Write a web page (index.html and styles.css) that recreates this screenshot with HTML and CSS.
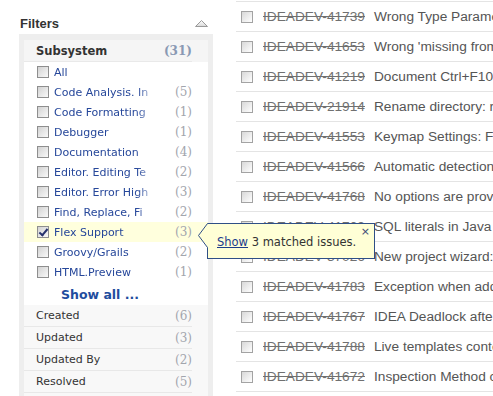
FILE: index.html
```html
<!DOCTYPE html>
<html lang="en">
  <head>
    <meta charset="UTF-8" />
    <title>Issues</title>
    <link rel="stylesheet" href="styles.css">
  </head>
  <body>
    <div class="page">
      <aside class="filters">
        <div class="filters-head">
          <h3>Filters</h3>
          <svg class="collapse" width="13" height="8" viewBox="0 0 13 8">
            <defs>
              <linearGradient id="arr" x1="0" y1="0" x2="0" y2="1">
                <stop offset="0" stop-color="#ffffff" />
                <stop offset="1" stop-color="#d8d8d8" />
              </linearGradient>
            </defs>
            <polygon points="0.5,7.5 6.5,1.5 12.5,7.5" fill="url(#arr)" stroke="#9a9a9a" />
          </svg>
        </div>

        <div class="filter-box">
          <div class="filter-inner">
            <div class="group-head">
              <div class="group-title">
                <span>Subsystem</span>
                <span class="total">(31)</span>
              </div>
            </div>

            <ul class="options">
              <li><span class="cb"></span><span class="label">All</span></li>
              <li><span class="cb"></span><span class="label">Code Analysis. In</span><span class="count">(5)</span></li>
              <li><span class="cb"></span><span class="label">Code Formatting</span><span class="count">(1)</span></li>
              <li><span class="cb"></span><span class="label">Debugger</span><span class="count">(1)</span></li>
              <li><span class="cb"></span><span class="label">Documentation</span><span class="count">(4)</span></li>
              <li><span class="cb"></span><span class="label">Editor. Editing Te</span><span class="count">(2)</span></li>
              <li><span class="cb"></span><span class="label">Editor. Error High</span><span class="count">(3)</span></li>
              <li><span class="cb"></span><span class="label">Find, Replace, Fi</span><span class="count">(2)</span></li>
              <li class="selected"><span class="cb checked"></span><span class="label">Flex Support</span><span class="count">(3)</span></li>
              <li><span class="cb"></span><span class="label">Groovy/Grails</span><span class="count">(2)</span></li>
              <li><span class="cb"></span><span class="label">HTML.Preview</span><span class="count">(1)</span></li>
            </ul>

            <a class="show-all">Show all ...</a>

            <ul class="groups">
              <li><span>Created</span><span class="count">(6)</span></li>
              <li><span>Updated</span><span class="count">(3)</span></li>
              <li><span>Updated By</span><span class="count">(2)</span></li>
              <li><span>Resolved</span><span class="count">(5)</span></li>
            </ul>
          </div>
        </div>
      </aside>

      <main class="issues">
        <ul>
          <li><span class="cb"></span><span class="id">IDEADEV-41739</span><span class="title">Wrong Type Parameter inference</span></li>
          <li><span class="cb"></span><span class="id">IDEADEV-41653</span><span class="title">Wrong 'missing from' warning</span></li>
          <li><span class="cb"></span><span class="id">IDEADEV-41219</span><span class="title">Document Ctrl+F10 shortcut</span></li>
          <li><span class="cb"></span><span class="id">IDEADEV-21914</span><span class="title">Rename directory: refactoring</span></li>
          <li><span class="cb"></span><span class="id">IDEADEV-41553</span><span class="title">Keymap Settings: Find</span></li>
          <li><span class="cb"></span><span class="id">IDEADEV-41566</span><span class="title">Automatic detection of</span></li>
          <li><span class="cb"></span><span class="id">IDEADEV-41768</span><span class="title">No options are provided</span></li>
          <li><span class="cb"></span><span class="id">IDEADEV-41709</span><span class="title">SQL literals in Java code</span></li>
          <li><span class="cb"></span><span class="id">IDEADEV-37026</span><span class="title">New project wizard: flex</span></li>
          <li><span class="cb"></span><span class="id">IDEADEV-41783</span><span class="title">Exception when adding</span></li>
          <li><span class="cb"></span><span class="id">IDEADEV-41767</span><span class="title">IDEA Deadlock after</span></li>
          <li><span class="cb"></span><span class="id">IDEADEV-41788</span><span class="title">Live templates context</span></li>
          <li><span class="cb"></span><span class="id">IDEADEV-41672</span><span class="title">Inspection Method can be</span></li>
        </ul>
      </main>

      <!-- popup next to the selected filter -->
      <div class="hint">
        <svg class="hint-tip" width="11" height="26" viewBox="0 0 11 26">
          <polygon points="10,0 0.5,12.5 10,25" fill="#ffffd6" />
          <polyline points="9.5,0.5 0.5,12.5 9.5,24.5" fill="none" stroke="#2f4f86" />
        </svg>
        <span class="hint-close">&times;</span>
        <span><a class="hint-link">Show</a> 3 matched issues.</span>
      </div>
    </div>
  </body>
</html>
```

FILE: styles.css
```css
body {
  margin: 0;
  width: 493px;
  height: 396px;
  overflow: hidden;
  background-color: white;
}

ul {
  list-style: none;
  margin: 0;
  padding: 0;
}

.page {
  position: relative;
  display: flex;
  gap: 23px;
  height: 396px;
  padding-left: 19px;
}

/* left column */
.filters {
  width: 194px;
  flex-shrink: 0;
  display: flex;
  flex-direction: column;
}

.filters-head {
  display: flex;
  justify-content: space-between;
  align-items: center;
  height: 21px;
  padding: 13px 5px 0 1px;
}

.filters-head h3 {
  margin: 0;
  font: bold 13px/17px "Liberation Sans", Arial, sans-serif;
  color: #333;
}

.collapse {
  margin-top: -2px;
}

.filter-box {
  flex: 1;
  background-color: #eeeeee;
  padding: 6px 5px 0;
  display: flex;
}

.filter-inner {
  flex: 1;
  background-color: white;
  display: flex;
  flex-direction: column;
  font-family: "DejaVu Sans", Verdana, sans-serif;
  font-size: 11px;
}

.group-head {
  background-color: #f5f5f5;
}

.group-title {
  display: flex;
  justify-content: space-between;
  align-items: center;
  height: 21px;
  margin-right: 16px;
  padding-left: 12px;
  border-bottom: 1px solid #e9e9e9;
  font-weight: bold;
  font-size: 11.5px;
  color: #333;
}

.total {
  font: bold 12px "DejaVu Serif", serif;
  color: #8a99b3;
}

.options li {
  display: flex;
  align-items: center;
  height: 20px;
  padding: 0 16px 0 13px;
}

.options li.selected {
  background-color: #ffffdd;
}

.cb {
  display: inline-block;
  box-sizing: border-box;
  width: 12px;
  height: 12px;
  border: 1px solid #8e8e8e;
  background: linear-gradient(135deg, #d2d2d2, #f9f9f9);
  flex-shrink: 0;
}

.cb.checked {
  position: relative;
}

.cb.checked::after {
  content: "";
  position: absolute;
  left: 3px;
  top: 0px;
  width: 3px;
  height: 7px;
  border: solid #28336e;
  border-width: 0 2px 2px 0;
  transform: rotate(40deg);
}

/* long names fade out before the count */
.label {
  margin-left: 5px;
  width: 106px;
  white-space: nowrap;
  color: #26479a;
  -webkit-mask-image: linear-gradient(to right, #000 78%, rgba(0, 0, 0, 0.1) 97%);
  mask-image: linear-gradient(to right, #000 78%, rgba(0, 0, 0, 0.1) 97%);
}

.count {
  margin-left: auto;
  font: 12px "DejaVu Serif", serif;
  color: #a2a5ad;
}

.show-all {
  display: block;
  height: 23px;
  line-height: 25px;
  padding-left: 37px;
  font-weight: bold;
  font-size: 12.5px;
  color: #1f4d9e;
  cursor: pointer;
}

.groups {
  flex: 1;
  background-color: #f8f8f8;
}

.groups li {
  display: flex;
  align-items: center;
  height: 21px;
  margin-right: 16px;
  padding-left: 12px;
  border-bottom: 1px solid #e8e8e8;
  color: #333;
}

/* issue list */
.issues {
  flex: 1;
  min-width: 0;
  overflow: hidden;
  padding-top: 1px;
}

.issues ul {
  border-top: 1px solid #e4e4e4;
}

.issues li {
  display: flex;
  align-items: center;
  height: 29px;
  padding-left: 5px;
  border-bottom: 1px solid #e4e4e4;
  white-space: nowrap;
  font-family: "Liberation Sans", Arial, sans-serif;
  font-size: 13.7px;
}

.issues .cb {
  border-color: #a3a3a3;
  background: linear-gradient(135deg, #d8d8d8, #ffffff);
}

.id {
  margin-left: 10px;
  color: #707070;
  text-decoration: line-through;
}

.title {
  margin-left: 9px;
  color: #555;
}

/* popup */
.hint {
  position: absolute;
  left: 207px;
  top: 223px;
  box-sizing: border-box;
  width: 168px;
  height: 36px;
  display: flex;
  align-items: center;
  padding: 2px 0 0 9px;
  border: 1px solid #2f4f86;
  background-color: #ffffd6;
  font: 11.5px "DejaVu Sans", Verdana, sans-serif;
  color: #333;
}

.hint-tip {
  position: absolute;
  left: -10px;
  top: -1px;
}

.hint-link {
  color: #1c3c8c;
  text-decoration: underline;
  cursor: pointer;
}

.hint-close {
  position: absolute;
  top: 1px;
  right: 4px;
  font-size: 11px;
  color: #3c4a78;
}
```
